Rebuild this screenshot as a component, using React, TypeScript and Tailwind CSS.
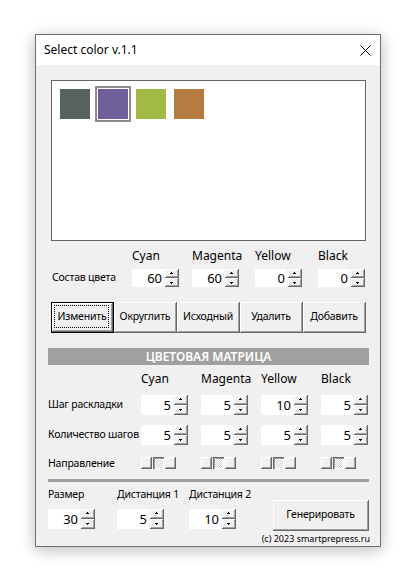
import React from "react";

function Arrow({ up }: { up?: boolean }) {
  return (
    <svg width="5" height="3" viewBox="0 0 5 3" shapeRendering="crispEdges">
      {up ? (
        <>
          <rect x="2" y="0" width="1" height="1" fill="#000" />
          <rect x="1" y="1" width="3" height="1" fill="#000" />
        </>
      ) : (
        <>
          <rect x="1" y="1" width="3" height="1" fill="#000" />
          <rect x="2" y="2" width="1" height="1" fill="#000" />
        </>
      )}
    </svg>
  );
}

function SpinHalf({ up }: { up?: boolean }) {
  return (
    <div className="flex-1 bg-[#f0f0f0] border-r border-b border-[#696969] shadow-[inset_1px_1px_0_#ffffff,inset_-1px_-1px_0_#a0a0a0] flex items-center justify-center">
      <Arrow up={up} />
    </div>
  );
}

function Num({ v, tall }: { v: string; tall?: boolean }) {
  return (
    <div className={tall ? "flex h-[20px]" : "flex h-[18px]"}>
      <div className="w-[32px] bg-white flex items-center justify-end pr-[2px] text-[13px] leading-none">
        {v}
      </div>
      <div className="ml-[1px] w-[14px] flex flex-col">
        <SpinHalf up />
        <SpinHalf />
      </div>
    </div>
  );
}

function Raised() {
  return (
    <div className="w-[11px] h-[12px] bg-[#f0f0f0] border-r border-b border-[#696969] shadow-[inset_1px_1px_0_#ffffff,inset_-1px_-1px_0_#a0a0a0]" />
  );
}

function Dir() {
  return (
    <div className="flex gap-[1px] h-[12px]">
      <Raised />
      <div className="w-[11px] h-[12px] border-t border-l border-[#696969] shadow-[inset_1px_1px_0_#a0a0a0,inset_-1px_-1px_0_#ffffff] bg-[repeating-conic-gradient(#d6d6d6_0%_25%,#ffffff_0%_50%)] bg-[length:2px_2px]" />
      <Raised />
    </div>
  );
}

function Btn({ children }: { children: React.ReactNode }) {
  return (
    <div className="w-[63px] h-[31px] bg-[#f0f0f0] border-r border-b border-[#696969] shadow-[inset_1px_1px_0_#ffffff,inset_-1px_-1px_0_#a0a0a0] flex items-center justify-center text-[10.5px] tracking-[-0.2px] whitespace-nowrap">
      {children}
    </div>
  );
}

export default function App() {
  return (
    <div className="min-h-[575px] w-[413px] bg-white pl-[35px] pt-[34px] font-['Noto_Sans',sans-serif] text-black">
      <div className="w-[346px] h-[513px] border border-[#6f6f6f] flex flex-col shadow-[0_3px_14px_rgba(0,0,0,0.28)]">
        <div className="h-[30px] shrink-0 bg-white flex items-center justify-between pl-[8px] pr-[9px]">
          <span className="text-[12px]">Select color v.1.1</span>
          <svg width="11" height="11" viewBox="0 0 11 11">
            <path d="M0.5 0.5L10.5 10.5M10.5 0.5L0.5 10.5" stroke="#000" strokeWidth="1" />
          </svg>
        </div>
        <div className="flex-1 bg-[#f0f0f0] flex flex-col">
          <div className="ml-[15px] mt-[15px] w-[315px] h-[161px] shrink-0 border border-[#646464] bg-white pl-[8px] pt-[8px] flex gap-[8px] items-start">
            <div className="w-[30px] h-[30px] bg-[#56625f]" />
            <div className="w-[30px] h-[30px] bg-[#6e5f99] outline-2 outline-solid outline-[#8c8c8c] outline-offset-1" />
            <div className="w-[30px] h-[30px] bg-[#a2ba45]" />
            <div className="w-[30px] h-[30px] bg-[#b67b40]" />
          </div>

          <div className="mt-[5px] h-[20px] flex items-center pl-[96px] text-[12px]">
            <div className="w-[60px]">Cyan</div>
            <div className="w-[63px]">Magenta</div>
            <div className="w-[63px]">Yellow</div>
            <div>Black</div>
          </div>
          <div className="mt-[3px] h-[18px] flex items-center pl-[16px]">
            <div className="w-[80px] text-[10.5px] tracking-[-0.2px] whitespace-nowrap">Состав цвета</div>
            <div className="w-[60px]"><Num v="60" /></div>
            <div className="w-[63px]"><Num v="60" /></div>
            <div className="w-[63px]"><Num v="0" /></div>
            <div><Num v="0" /></div>
          </div>

          <div className="mt-[15px] ml-[15px] flex h-[31px]">
            <div className="w-[63px] h-[31px] border border-black">
              <div className="relative h-full bg-[#f0f0f0] border-r border-b border-[#696969] shadow-[inset_1px_1px_0_#ffffff,inset_-1px_-1px_0_#a0a0a0] flex items-center justify-center text-[10.5px] tracking-[-0.2px] whitespace-nowrap">
                <div className="absolute left-[2px] top-[2px] right-[3px] bottom-[3px] border border-dotted border-black" />
                Изменить
              </div>
            </div>
            <Btn>Округлить</Btn>
            <Btn>Исходный</Btn>
            <Btn>Удалить</Btn>
            <Btn>Добавить</Btn>
          </div>

          <div className="mt-[15px] ml-[12px] w-[321px] h-[17px] bg-[#a0a0a0] text-white text-[12px] font-semibold flex items-center justify-center">
            ЦВЕТОВАЯ МАТРИЦА
          </div>

          <div className="mt-[4px] h-[20px] flex items-center pl-[105px] text-[12px]">
            <div className="w-[60px]">Cyan</div>
            <div className="w-[60px]">Magenta</div>
            <div className="w-[60px]">Yellow</div>
            <div>Black</div>
          </div>
          <div className="mt-[6px] h-[20px] flex items-center pl-[12px]">
            <div className="w-[93px] text-[10.5px] tracking-[-0.2px] whitespace-nowrap">Шаг раскладки</div>
            <div className="w-[60px]"><Num v="5" tall /></div>
            <div className="w-[60px]"><Num v="5" tall /></div>
            <div className="w-[60px]"><Num v="10" tall /></div>
            <div><Num v="5" tall /></div>
          </div>
          <div className="mt-[10px] h-[20px] flex items-center pl-[12px]">
            <div className="w-[93px] text-[10.5px] tracking-[-0.2px] whitespace-nowrap">Количество шагов</div>
            <div className="w-[60px]"><Num v="5" tall /></div>
            <div className="w-[60px]"><Num v="5" tall /></div>
            <div className="w-[60px]"><Num v="5" tall /></div>
            <div><Num v="5" tall /></div>
          </div>
          <div className="mt-[12px] h-[12px] flex items-center pl-[12px]">
            <div className="w-[93px] text-[10.5px] tracking-[-0.2px] leading-none whitespace-nowrap">Направление</div>
            <div className="w-[60px]"><Dir /></div>
            <div className="w-[60px]"><Dir /></div>
            <div className="w-[60px]"><Dir /></div>
            <div><Dir /></div>
          </div>

          <div className="mt-[10px] ml-[12px] w-[321px] h-[3px] bg-[#a0a0a0]" />

          <div className="mt-[3px] flex pl-[12px]">
            <div className="flex flex-col">
              <div className="h-[20px] flex items-center text-[10.5px] tracking-[-0.2px] whitespace-nowrap">
                <div className="w-[69px]">Размер</div>
                <div className="w-[72px]">Дистанция 1</div>
                <div>Дистанция 2</div>
              </div>
              <div className="mt-[4px] flex">
                <div className="w-[69px]"><Num v="30" tall /></div>
                <div className="w-[72px]"><Num v="5" tall /></div>
                <div><Num v="10" tall /></div>
              </div>
            </div>
            <div className="ml-auto pr-[10px] flex flex-col items-end">
              <div className="mt-[15px] mr-[1px] w-[96px] h-[31px] bg-[#f0f0f0] border-r border-b border-[#696969] shadow-[inset_1px_1px_0_#ffffff,inset_-1px_-1px_0_#a0a0a0] flex items-center justify-center text-[10.5px] tracking-[-0.2px]">
                Генерировать
              </div>
              <div className="mt-[2px] h-[12px] leading-[12px] text-[9px] whitespace-nowrap">
                (c) 2023 smartprepress.ru
              </div>
            </div>
          </div>
        </div>
      </div>
    </div>
  );
}
